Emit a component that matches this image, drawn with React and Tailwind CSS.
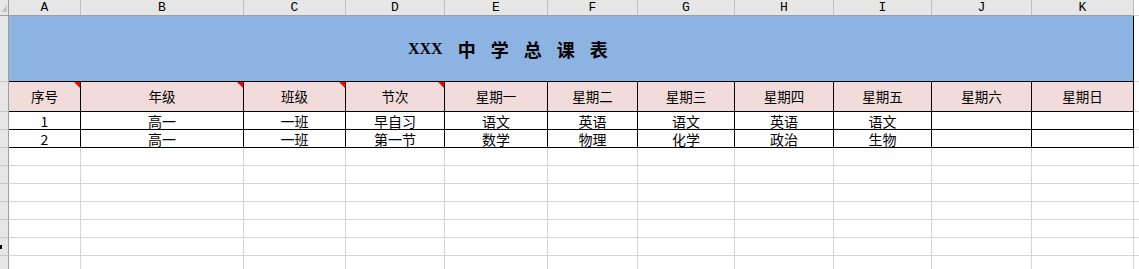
import React from "react";

const cols = ["A", "B", "C", "D", "E", "F", "G", "H", "I", "J", "K"];
const heads = ["序号", "年级", "班级", "节次", "星期一", "星期二", "星期三", "星期四", "星期五", "星期六", "星期日"];
const rows = [
  ["1", "高一", "一班", "早自习", "语文", "英语", "语文", "英语", "语文", "", ""],
  ["2", "高一", "一班", "第一节", "数学", "物理", "化学", "政治", "生物", "", ""],
];
const noted = [true, true, true, true, false, false, false, false, false, false, false];

const gridCols = "grid grid-cols-[9px_72px_163px_102px_99px_103px_90px_97px_99px_98px_100px_102px_1fr]";
const cjk = "font-['Noto_Sans_CJK_SC','Noto_Sans',sans-serif]";

function RowHead({ h, children }) {
  return (
    <div className={`${h} bg-[#e6e6e6] border-r border-b border-r-[#9e9e9e] border-b-[#c8c8c8] flex items-center`}>
      {children}
    </div>
  );
}

export default function App() {
  const blankRows = Array.from({ length: 7 });
  return (
    <div className="w-[1139px] h-[269px] overflow-hidden bg-white">
      {/* column letters */}
      <div className={gridCols}>
        <div className="relative h-[16px] bg-[#e6e6e6] border-r border-b border-[#9e9e9e]">
          <span className="absolute right-[1px] bottom-[3px] w-[6px] h-[7px] bg-[#c4c4c4] [clip-path:polygon(100%_0,100%_100%,0_100%)]" />
        </div>
        {cols.map((c) => (
          <div
            key={c}
            className="h-[16px] bg-[#e6e6e6] border-r border-r-[#bdbdbd] border-b border-b-[#9e9e9e] flex items-center justify-center font-['Liberation_Mono',monospace] text-[13px] leading-none text-black"
          >
            {c}
          </div>
        ))}
        <div className="h-[16px] bg-white border-b border-[#d4d4d4]" />
      </div>

      {/* title row */}
      <div className={gridCols}>
        <RowHead h="h-[66px]" />
        <div className="col-span-11 h-[66px] bg-[#8db3e2] border-r border-b border-black flex items-center pl-[399px] gap-[15px] text-black font-bold">
          <span className="font-['Liberation_Serif',serif] text-[16px] leading-none">XXX</span>
          {["中", "学", "总", "课", "表"].map((t) => (
            <span key={t} className={`${cjk} text-[18px] leading-none`}>{t}</span>
          ))}
        </div>
        <div className="h-[66px] border-b border-[#d4d4d4]" />
      </div>

      {/* column headings */}
      <div className={gridCols}>
        <RowHead h="h-[30px]" />
        {heads.map((t, i) => (
          <div
            key={t}
            className={`relative h-[30px] bg-[#f2dcdb] border-r border-b border-black flex items-center justify-center ${cjk} text-[13.5px] leading-none text-black`}
          >
            {t}
            {noted[i] && (
              <span className="absolute right-0 top-0 w-[6px] h-[6px] bg-[#ff0000] [clip-path:polygon(0_0,100%_0,100%_100%)]" />
            )}
          </div>
        ))}
        <div className="h-[30px] border-b border-[#d4d4d4]" />
      </div>

      {/* timetable rows */}
      {rows.map((r, ri) => (
        <div key={ri} className={gridCols}>
          <RowHead h="h-[18px]" />
          {r.map((t, ci) => (
            <div
              key={ci}
              className={`h-[18px] bg-white border-r border-b border-black flex items-center justify-center ${cjk} text-[14px] leading-none text-black`}
            >
              {t}
            </div>
          ))}
          <div className="h-[18px] border-b border-[#d4d4d4]" />
        </div>
      ))}

      {/* empty sheet rows */}
      {blankRows.map((_, ri) => (
        <div key={ri} className={gridCols}>
          <RowHead h="h-[18px]">
            {ri === 5 && <span className="w-[2px] h-[4px] bg-black" />}
          </RowHead>
          {cols.map((c) => (
            <div key={c} className="h-[18px] bg-white border-r border-b border-[#d4d4d4]" />
          ))}
          <div className="h-[18px] border-b border-[#d4d4d4]" />
        </div>
      ))}
    </div>
  );
}
